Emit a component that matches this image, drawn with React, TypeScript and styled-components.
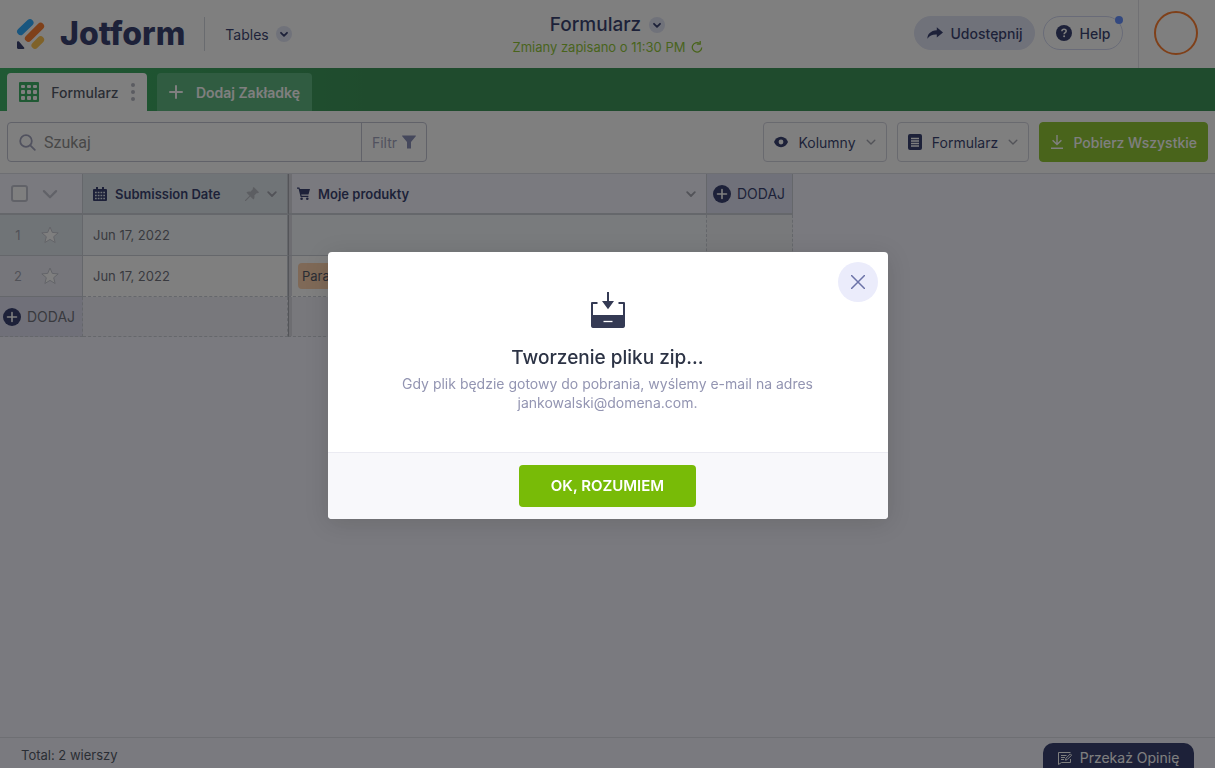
import React from "react";
import styled, { createGlobalStyle } from "styled-components";

const navy = "#0a1551";
const line = "#c9cdd8";
const cellLine = "#bfc4ce";
const lavender = "#f3f3fe";
const lime = "#78bb07";

const GlobalStyle = createGlobalStyle`
  *, *::before, *::after { box-sizing: border-box; }
  body {
    margin: 0;
    background: ${lavender};
    color: ${navy};
    font-family: Inter, "Liberation Sans", sans-serif;
    font-size: 14px;
  }
  button, input { font-family: inherit; font-size: inherit; color: inherit; }
  button { padding: 0; border: 0; background: none; cursor: pointer; }
  svg { display: block; flex: none; }
`;

const Page = styled.div`
  display: flex;
  flex-direction: column;
  min-height: 100vh;
`;

/* Header */

const Header = styled.header`
  display: grid;
  grid-template-columns: 1fr auto 1fr;
  align-items: center;
  height: 68px;
  background: #fff;
`;

const HeaderStart = styled.div`
  display: flex;
  align-items: center;
  padding-left: 16px;
`;

const Brand = styled.a`
  display: flex;
  align-items: center;
  gap: 15px;
  color: ${navy};
  font-size: 32px;
  font-weight: 800;
  line-height: 34px;
  text-decoration: none;
`;

const ProductButton = styled.button`
  display: flex;
  align-items: center;
  gap: 7px;
  height: 34px;
  margin-left: 19px;
  padding-left: 20px;
  border-left: 1px solid ${line};
`;

const ChevronDot = styled.span`
  display: flex;
  align-items: center;
  justify-content: center;
  width: 16px;
  height: 16px;
  border-radius: 50%;
  background: #dadef3;
`;

const TitleBlock = styled.div`
  display: flex;
  flex-direction: column;
  align-items: center;
  padding-top: 1px;
`;

const FormTitle = styled.button`
  display: flex;
  align-items: center;
  gap: 8px;
  font-size: 19px;
  font-weight: 500;
  line-height: 24px;
`;

const SaveStatus = styled.div`
  display: flex;
  align-items: center;
  gap: 5px;
  color: ${lime};
  font-size: 13px;
  line-height: 20px;
`;

const HeaderEnd = styled.div`
  display: flex;
  align-items: center;
  justify-content: flex-end;
  align-self: stretch;
  gap: 8px;
`;

const Pill = styled.button<{ $outlined?: boolean }>`
  position: relative;
  display: flex;
  align-items: center;
  justify-content: center;
  gap: 8px;
  width: ${(p) => (p.$outlined ? 80 : 121)}px;
  height: 34px;
  margin-bottom: 2px;
  border: 1px solid ${(p) => (p.$outlined ? "#c8ceed" : "#dadef3")};
  border-radius: 17px;
  background: ${(p) => (p.$outlined ? "#fff" : "#dadef3")};
  font-weight: 500;
`;

const UnreadDot = styled.span`
  position: absolute;
  top: -1px;
  right: -1px;
  width: 8px;
  height: 8px;
  border-radius: 50%;
  background: #4277ff;
`;

const Account = styled.div`
  display: flex;
  align-items: center;
  align-self: stretch;
  margin-left: 7px;
  padding: 0 17px 2px 15px;
  border-left: 1px solid #dcdce4;
`;

const Avatar = styled.button`
  width: 44px;
  height: 44px;
  border: 2px solid #ff6100;
  border-radius: 50%;
`;

/* Tabs */

const TabBar = styled.nav`
  display: flex;
  align-items: flex-end;
  gap: 10px;
  height: 43px;
  padding: 0 7px;
  background: linear-gradient(90deg, #12a144 0%, #0f7e34 30%, #0f7e34 100%);
`;

const Tab = styled.button<{ $active?: boolean }>`
  display: flex;
  align-items: center;
  justify-content: space-between;
  width: ${(p) => (p.$active ? 140 : 155)}px;
  height: 38px;
  padding: 0 12px;
  border-radius: 4px 4px 0 0;
  background: ${(p) => (p.$active ? "#fff" : "#3ba765")};
  color: ${(p) => (p.$active ? "#2c3345" : "#fff")};
  font-weight: ${(p) => (p.$active ? 500 : 600)};
  white-space: nowrap;
`;

/* Toolbar */

const Toolbar = styled.div`
  display: flex;
  align-items: center;
  gap: 10px;
  height: 63px;
  padding: 0 7px;
  border-bottom: 1px solid #d5d6e2;
  background: #fff;
`;

const SearchGroup = styled.div`
  display: flex;
  flex: 0 1 420px;
  height: 40px;
  margin-right: auto;
  border: 1px solid #b3b6c8;
  border-radius: 4px;
`;

const SearchLabel = styled.label`
  display: flex;
  flex: 1;
  align-items: center;
  gap: 6px;
  min-width: 0;
  padding-left: 11px;
`;

const SearchInput = styled.input`
  flex: 1;
  min-width: 0;
  border: 0;
  outline: 0;
  background: none;
  font-family: Roboto, sans-serif;
  font-size: 16px;
  &::placeholder { color: #757575; }
`;

const FilterButton = styled.button`
  display: flex;
  align-items: center;
  justify-content: center;
  gap: 5px;
  width: 65px;
  border-left: 1px solid #b3b6c8;
  color: #8d8fae;
`;

const ToolButton = styled.button<{ $width: number; $primary?: boolean }>`
  display: flex;
  flex: none;
  align-items: center;
  justify-content: space-between;
  width: ${(p) => p.$width}px;
  height: 40px;
  padding: 0 10px;
  border: 1px solid ${(p) => (p.$primary ? lime : "#c8cad8")};
  border-radius: 4px;
  background: ${(p) => (p.$primary ? lime : "#fff")};
  color: ${(p) => (p.$primary ? "#fff" : navy)};
  font-weight: ${(p) => (p.$primary ? 500 : 400)};
  white-space: nowrap;
`;

/* Table */

const TableArea = styled.main`
  flex: 1;
  overflow: hidden;
`;

const Grid = styled.table`
  width: 793px;
  table-layout: fixed;
  border-collapse: separate;
  border-spacing: 0;
`;

const HeadCell = styled.th<{ $bg: string; $width: number; $frozenEdge?: boolean }>`
  width: ${(p) => p.$width}px;
  height: 41px;
  padding: 0;
  border-right: 1px solid ${cellLine};
  border-bottom: 2px solid ${cellLine};
  border-left: ${(p) => (p.$frozenEdge ? "1px solid #9396a0" : "0")};
  background: ${(p) => p.$bg};
  box-shadow: ${(p) => (p.$frozenEdge ? "inset 3px 0 #d2d3db" : "none")};
  font-size: 13px;
  font-weight: 600;
  text-align: left;
`;

const Cell = styled.td<{ $bg: string; $frozenEdge?: boolean; $dashed?: boolean; $dashedSide?: boolean }>`
  height: 41px;
  padding: 0;
  border-right: 1px ${(p) => (p.$dashedSide ? "dashed" : "solid")} ${cellLine};
  border-bottom: 1px ${(p) => (p.$dashed ? "dashed" : "solid")} ${cellLine};
  border-left: ${(p) => (p.$frozenEdge ? "1px solid #9396a0" : "0")};
  background: ${(p) => p.$bg};
  box-shadow: ${(p) => (p.$frozenEdge ? "inset 3px 0 #d2d3db" : "none")};
  color: #50535f;
  font-size: 13px;
`;

const FooterCell = styled(Cell)`
  height: 40px;
`;

const CellRow = styled.div<{ $left: number; $gap?: number }>`
  display: flex;
  align-items: center;
  gap: ${(p) => p.$gap ?? 8}px;
  padding: 0 10px 0 ${(p) => p.$left}px;
`;

const Grow = styled.span`
  flex: 1;
  white-space: nowrap;
`;

const RowCheckbox = styled.input`
  appearance: none;
  width: 17px;
  height: 17px;
  margin: 0;
  border: 2px solid #b4b6c6;
  border-radius: 3px;
  background: #fff;
`;

const RowNumber = styled.span`
  width: 14px;
  color: #8d909e;
  text-align: center;
`;

const AddButton = styled.button`
  display: flex;
  align-items: center;
  gap: 6px;
  font-size: 14px;
  font-weight: 400;
`;

const ProductTag = styled.span`
  display: inline-block;
  margin-left: 9px;
  padding: 0 4px;
  border-radius: 4px;
  background: #ffc99b;
  color: #2c3345;
  line-height: 26px;
`;

/* Footer */

const Footer = styled.footer`
  display: flex;
  align-items: flex-end;
  justify-content: space-between;
  height: 31px;
  padding: 0 21px;
  border-top: 1px solid #d5d6e2;
  color: #2c3345;
  font-size: 13px;
`;

const Total = styled.span`
  line-height: 26px;
`;

const FeedbackButton = styled.button`
  display: flex;
  align-items: center;
  justify-content: center;
  gap: 8px;
  width: 151px;
  height: 25px;
  padding-top: 4px;
  border-radius: 10px 10px 0 0;
  background: ${navy};
  color: #fff;
  font-size: 14px;
  white-space: nowrap;
`;

/* Dialog */

const Overlay = styled.div`
  position: fixed;
  inset: 0;
  display: flex;
  align-items: center;
  justify-content: center;
  padding-top: 3px;
  background: rgba(41, 41, 41, 0.6);
`;

const Dialog = styled.section`
  position: relative;
  width: 560px;
  max-width: 100%;
  border-radius: 4px;
  background: #fff;
  box-shadow: 0 4px 24px rgba(0, 0, 0, 0.14);
  overflow: hidden;
`;

const DialogBody = styled.div`
  display: flex;
  flex-direction: column;
  align-items: center;
  padding: 40px 60px;
  text-align: center;
`;

const DialogTitle = styled.h2`
  margin: 18px 0 4px;
  color: #2c3345;
  font-size: 19px;
  font-weight: 500;
  line-height: 24px;
`;

const DialogText = styled.p`
  margin: 0;
  color: #9395b2;
  font-size: 14px;
  line-height: 19px;
`;

const CloseButton = styled.button`
  position: absolute;
  top: 10px;
  right: 10px;
  display: flex;
  align-items: center;
  justify-content: center;
  width: 40px;
  height: 40px;
  border-radius: 50%;
  background: #ebecfb;
`;

const DialogFooter = styled.div`
  display: flex;
  justify-content: center;
  padding: 12px;
  border-top: 1px solid #ebebf2;
  background: #f8f8fb;
`;

const ConfirmButton = styled.button`
  width: 177px;
  height: 42px;
  padding-bottom: 2px;
  border-radius: 4px;
  background: ${lime};
  color: #fff;
  font-size: 15px;
  font-weight: 600;
`;

/* Icons */

const Chevron = ({ size = 10, color = "#8f929f", width = 1.8 }) => (
  <svg width={size} height={size} viewBox="0 0 10 10" fill="none" stroke={color} strokeWidth={width} strokeLinecap="round" strokeLinejoin="round">
    <path d="M1.2 3.2 5 7l3.8-3.8" />
  </svg>
);

const SmallChevron = () => (
  <svg width="8" height="8" viewBox="0 0 8 8" fill="none" stroke={navy} strokeWidth="1.8" strokeLinecap="round" strokeLinejoin="round">
    <path d="M1 2.800 4 5.800l3-3" />
  </svg>
);

const LogoMark = () => (
  <svg width="29" height="32" viewBox="0 0 29 32" fill="none" strokeLinecap="round">
    <path d="M4.6 13.6 14 4.6" stroke="#0099ff" strokeWidth="7" />
    <path d="M12.4 20.4 24.6 8.2" stroke="#ff6100" strokeWidth="7" />
    <path d="M19 27.4 24.6 21.8" stroke="#ffb629" strokeWidth="7" />
    <path d="M1 24.2v5.600c0 .7.5 1.200 1.200 1.200h5.200c.9 0 1.300-.9.7-1.500L3 23.500c-.7-.7-2-.3-2 .7Z" fill={navy} />
  </svg>
);

const Refresh = () => (
  <svg width="12" height="12" viewBox="0 0 12 12" fill="none" stroke={lime} strokeWidth="1.3">
    <path d="M8.600 2.400A4.700 4.700 0 1 0 10.700 6.400" />
    <path d="M5.800 3.200h3.400V0" />
  </svg>
);

const Share = () => (
  <svg width="16" height="12" viewBox="0 0 16 12" fill={navy}>
    <path d="M9.8.3 16 5.4l-6.2 5V7.6C5.500 7.400 2.600 8.600.4 11.800c0-4.800 3.200-8.200 9.400-8.600Z" />
  </svg>
);

const Question = () => (
  <svg width="16" height="16" viewBox="0 0 16 16" fill="none">
    <circle cx="8" cy="8" r="8" fill={navy} />
    <path d="M5.900 6.300c0-1.300.9-2.100 2.100-2.100s2.200.8 2.200 1.900c0 1.600-2.100 1.500-2.100 3.100" stroke="#fff" strokeWidth="1.5" />
    <circle cx="8.100" cy="11.300" r="1" fill="#fff" />
  </svg>
);

const SheetGrid = () => (
  <svg width="20" height="20" viewBox="0 0 20 20">
    <rect width="20" height="20" rx="1" fill="#12a144" />
    {[3, 8, 14].map((y) => [2, 8, 14].map((x) => <rect key={`${x}-${y}`} x={x} y={y} width="4" height={y === 3 ? 3 : 4} rx="1" fill="#fff" />))}
  </svg>
);

const Dots = () => (
  <svg width="4" height="18" viewBox="0 0 4 18" fill="#a5a7b5">
    <circle cx="2" cy="2" r="2" />
    <circle cx="2" cy="9" r="2" />
    <circle cx="2" cy="16" r="2" />
  </svg>
);

const Plus = () => (
  <svg width="14" height="14" viewBox="0 0 14 14" stroke="#fff" strokeWidth="2" strokeLinecap="round">
    <path d="M7 1v12M1 7h12" />
  </svg>
);

const Magnifier = () => (
  <svg width="17" height="17" viewBox="0 0 17 17" fill="none" stroke="#8d8fae" strokeWidth="1.8" strokeLinecap="round">
    <circle cx="7" cy="7" r="5.800" />
    <path d="m11.300 11.300 4.500 4.500" />
  </svg>
);

const Funnel = () => (
  <svg width="14" height="14" viewBox="0 0 14 14" fill="#6f76a7">
    <path d="M.5.500h13c.4 0 .5.500.3.800L9 7v6.500H5V7L.2 1.300C0 1 .1.500.5.500Z" />
  </svg>
);

const Eye = () => (
  <svg width="14" height="12" viewBox="0 0 14 12">
    <path d="M7 .8C3.700.8 1.200 3 0 6c1.200 3 3.700 5.200 7 5.200S12.800 9 14 6C12.800 3 10.300.8 7 .8Z" fill={navy} />
    <circle cx="7" cy="6" r="2.400" fill="#fff" />
  </svg>
);

const Doc = () => (
  <svg width="14" height="16" viewBox="0 0 14 16">
    <rect width="14" height="16" rx="2" fill={navy} />
    <path d="M3 4.500h8M3 7h8M3 9.500h8M3 12h8" stroke="#fff" strokeWidth="1.300" />
  </svg>
);

const Download = () => (
  <svg width="14" height="14" viewBox="0 0 14 14" fill="none" stroke="#fff" strokeWidth="1.400">
    <path d="M7 0v9M2.600 5.200 7 9.500l4.400-4.300M1 13.200h12" />
  </svg>
);

const Calendar = () => (
  <svg width="14" height="14" viewBox="0 0 14 14">
    <path d="M1 2h2V0h2v2h4V0h2v2h2a1 1 0 0 1 1 1v10a1 1 0 0 1-1 1H1a1 1 0 0 1-1-1V3a1 1 0 0 1 1-1Z" fill={navy} />
    <path d="M2 5.500h10M2 8.500h10M2 11.500h10" stroke="#dae3ea" strokeWidth="1.600" strokeDasharray="1.700 1.060" />
  </svg>
);

const Pin = () => (
  <svg width="14" height="14" viewBox="0 0 14 14" fill="#a9adb6">
    <path d="m8.800 0 5.200 5.200-1.100 1.100-1-.3-2.600 2.600c.5 1.500.2 3-.9 4L5.300 9.500.8 14H0v-.8l4.500-4.500L1.400 5.600c1-1.100 2.500-1.400 4-.9L8 2.100l-.3-1Z" />
  </svg>
);

const Cart = () => (
  <svg width="13" height="13" viewBox="0 0 13 13" fill={navy}>
    <path d="M0 .5h2.400l.5 1.500H13l-1.500 5.600H4.300l.3 1.200h6.800V10H3.600L1.600 1.700H0Z" />
    <circle cx="4.600" cy="11.700" r="1.300" />
    <circle cx="10.300" cy="11.700" r="1.300" />
  </svg>
);

const Star = () => (
  <svg width="18" height="18" viewBox="0 0 18 18" fill="#fff" stroke="#b9bcc8" strokeWidth="1" strokeLinejoin="round">
    <path d="m9 1 2.300 5.400 5.900.5-4.500 3.800 1.400 5.800L9 13.400l-5.100 3.100 1.400-5.800L.8 6.900l5.900-.5Z" />
  </svg>
);

const AddDot = () => (
  <svg width="18" height="18" viewBox="0 0 18 18" stroke="#fff" strokeWidth="1.600" strokeLinecap="round">
    <circle cx="9" cy="9" r="9" fill={navy} stroke="none" />
    <path d="M9 4.500v9M4.500 9h9" />
  </svg>
);

const Feedback = () => (
  <svg width="14" height="14" viewBox="0 0 14 14" fill="none" stroke="#fff" strokeWidth="1">
    <path d="M12.500 8v3.500h-9L.5 13.500V1.500h12" />
    <path d="M3 4.500h5.500M3 6.500h4M3 8.500h3" />
    <path d="m7.500 9.200.4-1.900 4.400-4.400 1.300 1.300-4.400 4.400Z" />
  </svg>
);

const Inbox = () => (
  <svg width="36" height="36" viewBox="0 0 36 36">
    <path d="M7.500 10H2.200C1.500 10 1 10.500 1 11.200v22.600C1 35 1.600 36 3 36h30c1.400 0 2-1 2-2.200V11.200c0-.7-.5-1.200-1.200-1.200h-5.300v2H33v11H3V12h4.500Z" fill="#343a54" />
    <path d="M17 0h2v9h5l-6 8.300L12 9h5Z" fill="#343a54" />
    <path d="M13.500 29.500h9" stroke="#fff" strokeWidth="1.300" />
  </svg>
);

const Cross = () => (
  <svg width="14" height="14" viewBox="0 0 14 14" stroke="#6c73a8" strokeWidth="1.500">
    <path d="m0 0 14 14M14 0 0 14" />
  </svg>
);

const rows = [
  { id: 1, date: "Jun 17, 2022", numberBg: "#dae3ea", bg: "#f0f5fa", addBg: "#edf0f5" },
  { id: 2, date: "Jun 17, 2022", product: "Para butów", numberBg: "#e8e8f5", bg: "#ffffff", addBg: "#edeef8" },
];

export default function App() {
  return (
    <>
      <GlobalStyle />
      <Page>
        <Header>
          <HeaderStart>
            <Brand href="#home">
              <LogoMark />
              Jotform
            </Brand>
            <ProductButton>
              Tables
              <ChevronDot><SmallChevron /></ChevronDot>
            </ProductButton>
          </HeaderStart>
          <TitleBlock>
            <FormTitle>
              Formularz
              <ChevronDot><SmallChevron /></ChevronDot>
            </FormTitle>
            <SaveStatus>
              Zmiany zapisano o 11:30 PM
              <Refresh />
            </SaveStatus>
          </TitleBlock>
          <HeaderEnd>
            <Pill><Share />Udostępnij</Pill>
            <Pill $outlined><Question />Help<UnreadDot /></Pill>
            <Account><Avatar aria-label="Konto" /></Account>
          </HeaderEnd>
        </Header>

        <TabBar>
          <Tab $active><SheetGrid />Formularz<Dots /></Tab>
          <Tab><Plus />Dodaj Zakładkę</Tab>
        </TabBar>

        <Toolbar>
          <SearchGroup>
            <SearchLabel>
              <Magnifier />
              <SearchInput type="text" placeholder="Szukaj" aria-label="Szukaj" />
            </SearchLabel>
            <FilterButton>Filtr<Funnel /></FilterButton>
          </SearchGroup>
          <ToolButton $width={124}><Eye />Kolumny<Chevron width={1.4} /></ToolButton>
          <ToolButton $width={132}><Doc />Formularz<Chevron width={1.4} /></ToolButton>
          <ToolButton $width={169} $primary><Download />Pobierz Wszystkie</ToolButton>
        </Toolbar>

        <TableArea>
          <Grid>
            <thead>
              <tr>
                <HeadCell $bg={lavender} $width={83}>
                  <CellRow $left={11} $gap={14}>
                    <RowCheckbox type="checkbox" aria-label="Zaznacz wszystkie" />
                    <Chevron size={16} width={1.4} color="#b4b6c6" />
                  </CellRow>
                </HeadCell>
                <HeadCell $bg="#dae3ea" $width={205}>
                  <CellRow $left={10}>
                    <Calendar /><Grow>Submission Date</Grow><Pin /><Chevron />
                  </CellRow>
                </HeadCell>
                <HeadCell $bg={lavender} $width={419} $frozenEdge>
                  <CellRow $left={8}>
                    <Cart /><Grow>Moje produkty</Grow><Chevron />
                  </CellRow>
                </HeadCell>
                <HeadCell $bg="#dadcf3" $width={86}>
                  <CellRow $left={6}><AddButton><AddDot />DODAJ</AddButton></CellRow>
                </HeadCell>
              </tr>
            </thead>
            <tbody>
              {rows.map((row, index) => {
                const last = index === rows.length - 1;
                return (
                  <tr key={row.id}>
                    <Cell $bg={row.numberBg}>
                      <CellRow $left={11} $gap={16}>
                        <RowNumber>{row.id}</RowNumber>
                        <button aria-label="Oznacz gwiazdką"><Star /></button>
                      </CellRow>
                    </Cell>
                    <Cell $bg={row.bg} $dashed={last}><CellRow $left={10}>{row.date}</CellRow></Cell>
                    <Cell $bg={row.bg} $dashed={last} $dashedSide $frozenEdge>
                      {row.product && <ProductTag>{row.product}</ProductTag>}
                    </Cell>
                    <Cell $bg={row.addBg} $dashed $dashedSide />
                  </tr>
                );
              })}
              <tr>
                <FooterCell $bg="#dadaf0" $dashed $dashedSide>
                  <CellRow $left={3}><AddButton><AddDot />DODAJ</AddButton></CellRow>
                </FooterCell>
                <FooterCell $bg="#ededf8" $dashed $dashedSide />
                <FooterCell $bg="#ededf8" $dashed $dashedSide $frozenEdge />
                <FooterCell $bg="#ededf8" $dashed $dashedSide />
              </tr>
            </tbody>
          </Grid>
        </TableArea>

        <Footer>
          <Total>Total: 2 wierszy</Total>
          <FeedbackButton><Feedback />Przekaż Opinię</FeedbackButton>
        </Footer>
      </Page>

      <Overlay>
        <Dialog role="dialog" aria-modal="true" aria-labelledby="zip-title">
          <CloseButton aria-label="Zamknij"><Cross /></CloseButton>
          <DialogBody>
            <Inbox />
            <DialogTitle id="zip-title">Tworzenie pliku zip...</DialogTitle>
            <DialogText>
              Gdy plik będzie gotowy do pobrania, wyślemy e-mail na adres jankowalski@domena.com.
            </DialogText>
          </DialogBody>
          <DialogFooter>
            <ConfirmButton>OK, ROZUMIEM</ConfirmButton>
          </DialogFooter>
        </Dialog>
      </Overlay>
    </>
  );
}
